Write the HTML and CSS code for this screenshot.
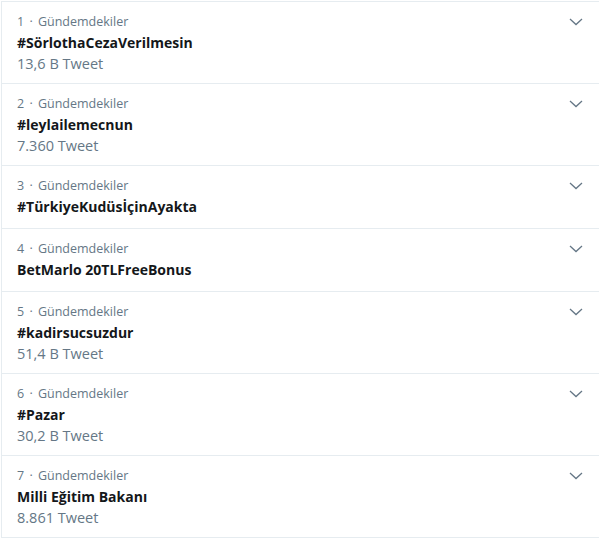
FILE: index.html
```html
<!DOCTYPE html>
<html lang="tr">
<head>
<meta charset="utf-8">
<link rel="stylesheet" href="styles.css">
</head>
<body>
<div class="trends">
  <div class="trend">
    <div class="meta">1 · Gündemdekiler</div>
    <div class="name">#SörlothaCezaVerilmesin</div>
    <div class="count">13,6 B Tweet</div>
    <svg class="caret" viewBox="0 0 14 8"><path d="M1 1 L7 6.5 L13 1" /></svg>
  </div>
  <div class="trend">
    <div class="meta">2 · Gündemdekiler</div>
    <div class="name">#leylailemecnun</div>
    <div class="count">7.360 Tweet</div>
    <svg class="caret" viewBox="0 0 14 8"><path d="M1 1 L7 6.5 L13 1" /></svg>
  </div>
  <div class="trend">
    <div class="meta">3 · Gündemdekiler</div>
    <div class="name">#TürkiyeKudüsİçinAyakta</div>
    <svg class="caret" viewBox="0 0 14 8"><path d="M1 1 L7 6.5 L13 1" /></svg>
  </div>
  <div class="trend">
    <div class="meta">4 · Gündemdekiler</div>
    <div class="name">BetMarlo 20TLFreeBonus</div>
    <svg class="caret" viewBox="0 0 14 8"><path d="M1 1 L7 6.5 L13 1" /></svg>
  </div>
  <div class="trend">
    <div class="meta">5 · Gündemdekiler</div>
    <div class="name">#kadirsucsuzdur</div>
    <div class="count">51,4 B Tweet</div>
    <svg class="caret" viewBox="0 0 14 8"><path d="M1 1 L7 6.5 L13 1" /></svg>
  </div>
  <div class="trend">
    <div class="meta">6 · Gündemdekiler</div>
    <div class="name">#Pazar</div>
    <div class="count">30,2 B Tweet</div>
    <svg class="caret" viewBox="0 0 14 8"><path d="M1 1 L7 6.5 L13 1" /></svg>
  </div>
  <div class="trend">
    <div class="meta">7 · Gündemdekiler</div>
    <div class="name">Milli Eğitim Bakanı</div>
    <div class="count">8.861 Tweet</div>
    <svg class="caret" viewBox="0 0 14 8"><path d="M1 1 L7 6.5 L13 1" /></svg>
  </div>
</div>
</body>
</html>
```
FILE: styles.css
```css
html, body {
  margin: 0;
  padding: 0;
  background: #fff;
}
body {
  font-family: "Open Sans", "Noto Sans", sans-serif;
  color: #14171a;
}
.trends {
  margin: 1px 0 0 1px;
  border-top: 1px solid #e6ecf0;
  border-left: 1px solid #e6ecf0;
}
.trend {
  position: relative;
  padding: 10px 15px 10px 15px;
  border-bottom: 1px solid #e6ecf0;
}
.meta {
  font-size: 12.5px;
  line-height: 20px;
  word-spacing: 2px;
  color: #657786;
}
.name {
  font-size: 14px;
  font-weight: 700;
  line-height: 22px;
}
.count {
  font-size: 14.5px;
  line-height: 19px;
  color: #657786;
}
.caret {
  position: absolute;
  top: 16px;
  right: 16px;
  width: 14px;
  height: 8px;
  fill: none;
  stroke: #657786;
  stroke-width: 1.3;
}
```
